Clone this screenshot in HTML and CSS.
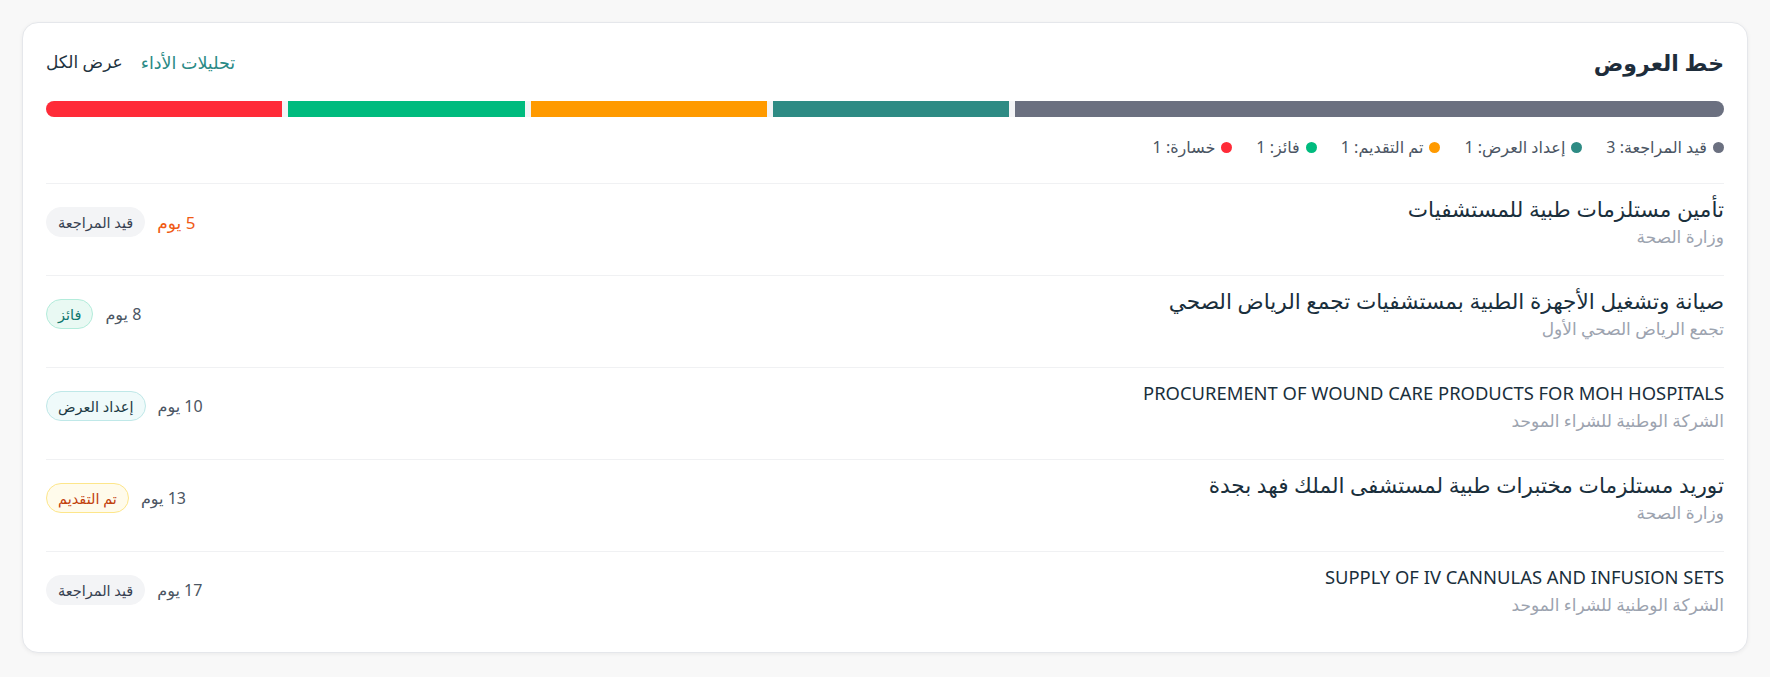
FILE: index.html
```html
<!DOCTYPE html>
<html lang="ar" dir="rtl">
<head>
    <meta charset="UTF-8">
    <meta name="viewport" content="width=device-width, initial-scale=1.0">
    <title>خط العروض</title>
    <link rel="stylesheet" href="styles.css">
</head>
<body>
    <div class="card">
        <div class="card-header">
            <h2>خط العروض</h2>
            <div class="header-links">
                <a href="#" class="link-accent">تحليلات الأداء</a>
                <a href="#">عرض الكل</a>
            </div>
        </div>

        <div class="pipeline-bar">
            <span class="seg seg-review" style="flex-grow: 3"></span>
            <span class="seg seg-prep" style="flex-grow: 1"></span>
            <span class="seg seg-submitted" style="flex-grow: 1"></span>
            <span class="seg seg-won" style="flex-grow: 1"></span>
            <span class="seg seg-lost" style="flex-grow: 1"></span>
        </div>

        <div class="legend">
            <span class="legend-item"><i class="dot seg-review"></i>قيد المراجعة: 3</span>
            <span class="legend-item"><i class="dot seg-prep"></i>إعداد العرض: 1</span>
            <span class="legend-item"><i class="dot seg-submitted"></i>تم التقديم: 1</span>
            <span class="legend-item"><i class="dot seg-won"></i>فائز: 1</span>
            <span class="legend-item"><i class="dot seg-lost"></i>خسارة: 1</span>
        </div>

        <div class="deal-list">
            <div class="deal">
                <div class="deal-info">
                    <div class="deal-title">تأمين مستلزمات طبية للمستشفيات</div>
                    <div class="deal-client">وزارة الصحة</div>
                </div>
                <div class="deal-meta">
                    <span class="days days-urgent">5 يوم</span>
                    <span class="badge badge-review">قيد المراجعة</span>
                </div>
            </div>

            <div class="deal">
                <div class="deal-info">
                    <div class="deal-title">صيانة وتشغيل الأجهزة الطبية بمستشفيات تجمع الرياض الصحي</div>
                    <div class="deal-client">تجمع الرياض الصحي الأول</div>
                </div>
                <div class="deal-meta">
                    <span class="days">8 يوم</span>
                    <span class="badge badge-won">فائز</span>
                </div>
            </div>

            <div class="deal">
                <div class="deal-info">
                    <div class="deal-title latin">PROCUREMENT OF WOUND CARE PRODUCTS FOR MOH HOSPITALS</div>
                    <div class="deal-client">الشركة الوطنية للشراء الموحد</div>
                </div>
                <div class="deal-meta">
                    <span class="days">10 يوم</span>
                    <span class="badge badge-prep">إعداد العرض</span>
                </div>
            </div>

            <div class="deal">
                <div class="deal-info">
                    <div class="deal-title">توريد مستلزمات مختبرات طبية لمستشفى الملك فهد بجدة</div>
                    <div class="deal-client">وزارة الصحة</div>
                </div>
                <div class="deal-meta">
                    <span class="days">13 يوم</span>
                    <span class="badge badge-submitted">تم التقديم</span>
                </div>
            </div>

            <div class="deal">
                <div class="deal-info">
                    <div class="deal-title latin">SUPPLY OF IV CANNULAS AND INFUSION SETS</div>
                    <div class="deal-client">الشركة الوطنية للشراء الموحد</div>
                </div>
                <div class="deal-meta">
                    <span class="days">17 يوم</span>
                    <span class="badge badge-review">قيد المراجعة</span>
                </div>
            </div>
        </div>
    </div>
</body>
</html>
```

FILE: styles.css
```css
body {
    background-color: #f8f8f8;
    color: #1a2f3c;
    font-family: "Noto Sans", "DejaVu Sans", sans-serif;
    margin: 0;
    padding: 22px;
}

.card {
    background-color: #fff;
    border: 1px solid #e5e7eb;
    border-radius: 16px;
    box-shadow: 0 1px 4px rgba(0, 0, 0, 0.06);
    padding: 23px;
}

.card-header {
    display: flex;
    justify-content: space-between;
    align-items: center;
    height: 32px;
}

h2 {
    margin: 0;
    font-size: 22px;
    font-weight: bold;
    color: #1e2d3b;
}

.header-links {
    display: flex;
    gap: 18px;
    font-size: 17px;
}

.header-links a {
    color: #1e3340;
    text-decoration: none;
}

.header-links a.link-accent {
    color: #2a8a86;
    font-size: 17.5px;
}

/* pipeline bar */
.pipeline-bar {
    display: flex;
    gap: 6px;
    height: 16px;
    margin-top: 23px;
    border-radius: 8px;
    overflow: hidden;
    background-color: #f3f4f6;
}

.seg {
    flex-basis: 0;
}

.seg-review { background-color: #6b7080; }
.seg-prep { background-color: #2e8b84; }
.seg-submitted { background-color: #ff9a00; }
.seg-won { background-color: #00bb7e; }
.seg-lost { background-color: #ff2b38; }

.legend {
    display: flex;
    gap: 24px;
    margin-top: 19px;
    font-size: 16px;
    line-height: 22px;
    color: #4b5563;
}

.legend-item {
    display: flex;
    align-items: center;
    gap: 6px;
}

.dot {
    width: 11px;
    height: 11px;
    border-radius: 50%;
}

/* deals list */
.deal-list {
    margin-top: 25px;
}

.deal {
    display: flex;
    justify-content: space-between;
    align-items: center;
    border-top: 1px solid #f0f1f3;
    padding: 12px 0 13px;
}

.deal + .deal {
    margin-top: 14px;
}

.deal-title {
    font-size: 21.6px;
    line-height: 26px;
    color: #1a2f3c;
}

.deal-title.latin {
    font-size: 18.4px;
}

.deal-client {
    margin-top: 4px;
    font-size: 17px;
    line-height: 22px;
    color: #9ca3af;
}

.deal-meta {
    display: flex;
    align-items: center;
    gap: 12px;
}

.days {
    font-size: 16px;
    color: #4b5563;
}

.days-urgent {
    color: #f05a14;
    font-size: 17px;
}

.badge {
    font-size: 14.5px;
    line-height: 20px;
    padding: 4px 11px;
    border: 1px solid transparent;
    border-radius: 16px;
}

.badge-review {
    background-color: #f3f4f6;
    border-color: #f3f4f6;
    color: #374151;
}

.badge-won {
    background-color: #e9f9f3;
    border-color: #b3ecdb;
    color: #0f766e;
}

.badge-prep {
    background-color: #effafa;
    border-color: #bfe8e8;
    color: #1d3b45;
}

.badge-submitted {
    background-color: #fffbeb;
    border-color: #fde68a;
    color: #c2410c;
}
```
